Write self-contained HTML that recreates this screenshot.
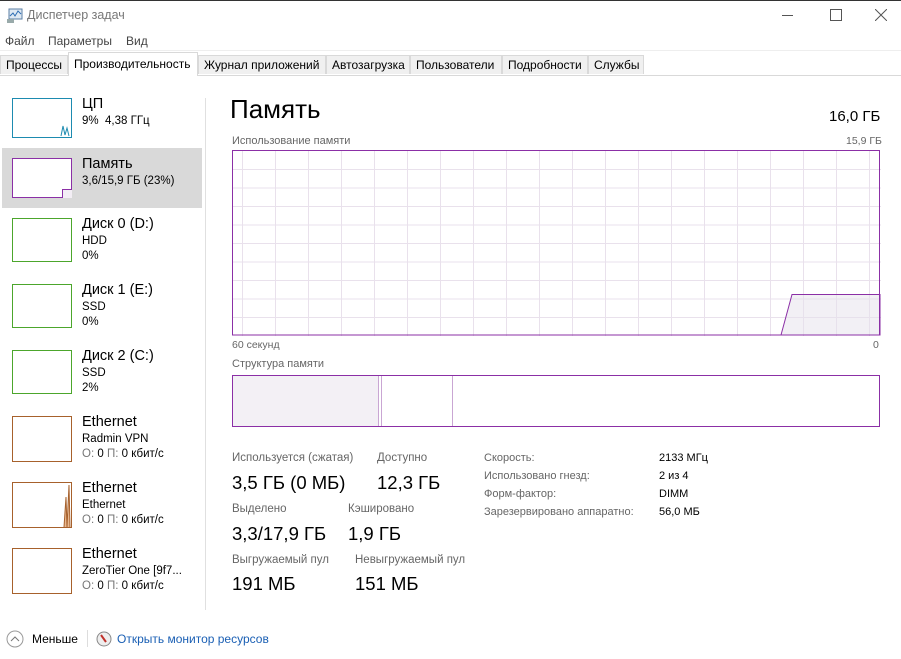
<!DOCTYPE html>
<html><head><meta charset="utf-8"><style>
body{margin:0;width:901px;height:659px;background:#fff;position:relative;overflow:hidden;font-family:"Liberation Sans",sans-serif;color:#000}
.a{position:absolute;white-space:nowrap}
.g{color:#6d6d6d}
.tab{position:absolute;top:55px;height:19px;background:#f0f0f0;border:1px solid #d9d9d9;border-bottom:none;font-size:12px;line-height:19px;padding-left:5px;box-sizing:border-box}
.th{position:absolute;left:12px;width:60px;box-sizing:border-box;background:#fff}
.t1{font-size:14.5px}
.t2{font-size:11.5px}
.sl{font-size:11.5px;color:#666}
.sv{font-size:18.5px}
.rs{font-size:11px;color:#444}
</style></head><body>
<div class="a" style="left:0;top:0;width:901px;height:1px;background:#333"></div>
<svg class="a" style="left:6px;top:8px" width="18" height="16" viewBox="0 0 18 16"><rect x="3" y="1" width="13" height="10" fill="#dfe9f3" stroke="#5b7fa6"/><polyline points="4,8 7,5 9,8 12,3 15,6" fill="none" stroke="#2d6db3"/><rect x="1" y="11" width="7" height="4" fill="#9aa" /></svg>
<div class="a g" style="left:27px;top:8px;font-size:12.5px;color:#777">Диспетчер задач</div>
<div class="a" style="left:782px;top:15px;width:11px;height:1px;background:#555"></div>
<div class="a" style="left:830px;top:9px;width:10px;height:10px;border:1px solid #555"></div>
<svg class="a" style="left:875px;top:9px" width="12" height="12"><path d="M0 0L12 12M12 0L0 12" stroke="#555"/></svg>
<div class="a" style="left:5px;top:34px;font-size:12px;color:#444">Файл</div>
<div class="a" style="left:48px;top:34px;font-size:12px;color:#444">Параметры</div>
<div class="a" style="left:126px;top:34px;font-size:12px;color:#444">Вид</div>
<div class="a" style="left:0;top:50px;width:901px;height:1px;background:#eee"></div>
<div class="a" style="left:0;top:75px;width:901px;height:1px;background:#d9d9d9"></div>
<div class="tab" style="left:0;width:68px">Процессы</div>
<div class="tab" style="left:68px;top:52px;height:24px;width:130px;background:#fff;line-height:22px">Производительность</div>
<div class="tab" style="left:198px;width:128px">Журнал приложений</div>
<div class="tab" style="left:326px;width:84px">Автозагрузка</div>
<div class="tab" style="left:410px;width:92px">Пользователи</div>
<div class="tab" style="left:502px;width:86px">Подробности</div>
<div class="tab" style="left:588px;width:56px;border-right:1px solid #d9d9d9">Службы</div>

<div class="a" style="left:2px;top:148px;width:200px;height:60px;background:#d9d9d9"></div>
<div class="a" style="left:205px;top:98px;width:1px;height:512px;background:#e0e0e0"></div>

<div class="th" style="top:98px;height:40px;border:1px solid #1d8bb0"></div>
<svg class="a" style="left:60px;top:122px" width="12" height="15"><polyline points="1,14 3,4 5,13 7,6 9,14" fill="none" stroke="#1d8bb0"/></svg>
<div class="a t1" style="left:82px;top:96px">ЦП</div>
<div class="a t2" style="left:82px;top:115px">9%&nbsp; 4,38 ГГц</div>

<div class="th" style="top:158px;height:40px;border:1px solid #8b2fa6"></div>
<div class="a" style="left:62px;top:189px;width:9px;height:8px;border-left:1px solid #8b2fa6;border-top:1px solid #8b2fa6;background:#f3eef5"></div>
<div class="a t1" style="left:82px;top:156px">Память</div>
<div class="a t2" style="left:82px;top:175px">3,6/15,9 ГБ (23%)</div>

<div class="th" style="top:218px;height:44px;border:1px solid #4ca62c"></div>
<div class="a t1" style="left:82px;top:216px">Диск 0 (D:)</div>
<div class="a t2" style="left:82px;top:235px">HDD</div>
<div class="a t2" style="left:82px;top:250px">0%</div>
<div class="th" style="top:284px;height:44px;border:1px solid #4ca62c"></div>
<div class="a t1" style="left:82px;top:282px">Диск 1 (E:)</div>
<div class="a t2" style="left:82px;top:301px">SSD</div>
<div class="a t2" style="left:82px;top:316px">0%</div>
<div class="th" style="top:350px;height:44px;border:1px solid #4ca62c"></div>
<div class="a t1" style="left:82px;top:348px">Диск 2 (C:)</div>
<div class="a t2" style="left:82px;top:367px">SSD</div>
<div class="a t2" style="left:82px;top:382px">2%</div>

<div class="th" style="top:416px;height:46px;border:1px solid #a7612c"></div>
<div class="a t1" style="left:82px;top:414px">Ethernet</div>
<div class="a t2" style="left:82px;top:433px">Radmin VPN</div>
<div class="a t2" style="left:82px;top:448px"><span style="color:#777">О:</span> 0 <span style="color:#777">П:</span> 0 кбит/с</div>
<div class="th" style="top:482px;height:46px;border:1px solid #a7612c"></div>
<svg class="a" style="left:62px;top:483px" width="9" height="44"><path d="M2 44L4 14L5 44M5 44L7 2L8 44" fill="#e8b890" stroke="#a7612c"/></svg>
<div class="a t1" style="left:82px;top:480px">Ethernet</div>
<div class="a t2" style="left:82px;top:499px">Ethernet</div>
<div class="a t2" style="left:82px;top:514px"><span style="color:#777">О:</span> 0 <span style="color:#777">П:</span> 0 кбит/с</div>
<div class="th" style="top:548px;height:46px;border:1px solid #a7612c"></div>
<div class="a t1" style="left:82px;top:546px">Ethernet</div>
<div class="a t2" style="left:82px;top:565px">ZeroTier One [9f7...</div>
<div class="a t2" style="left:82px;top:580px"><span style="color:#777">О:</span> 0 <span style="color:#777">П:</span> 0 кбит/с</div>

<div class="a" style="left:230px;top:94px;font-size:26px">Память</div>
<div class="a" style="left:829px;top:108px;font-size:15px">16,0 ГБ</div>
<div class="a sl" style="left:232px;top:135px;font-size:11px">Использование памяти</div>
<div class="a sl" style="left:846px;top:135px;font-size:10.5px">15,9 ГБ</div>
<svg class="a" style="left:232px;top:150px" width="649" height="186">
<g stroke="#e9e1ec" stroke-width="1">
<path d="M0 19.5H649M0 38H649M0 56.5H649M0 75H649M0 93.5H649M0 112H649M0 130.5H649M0 149H649M0 167.5H649"/>
<path d="M637.5 0V186M604.5 0V186M571.5 0V186M538.5 0V186M505.5 0V186M472.5 0V186M439.5 0V186M406.5 0V186M373.5 0V186M340.5 0V186M307.5 0V186M274.5 0V186M241.5 0V186M208.5 0V186M175.5 0V186M142.5 0V186M109.5 0V186M76.5 0V186M43.5 0V186M10.5 0V186"/>
</g>
<path d="M549 185L560 144.5H648V185Z" fill="rgba(230,225,235,0.5)" stroke="#8b2fa6"/>
<rect x="0.5" y="0.5" width="647" height="184.5" fill="none" stroke="#8b2fa6"/>
</svg>
<div class="a sl" style="left:232px;top:339px;font-size:10.5px">60 секунд</div>
<div class="a sl" style="left:873px;top:339px;font-size:10.5px">0</div>
<div class="a sl" style="left:232px;top:358px;font-size:11px">Структура памяти</div>
<svg class="a" style="left:232px;top:375px" width="649" height="52">
<rect x="1" y="1" width="146" height="50" fill="#f3f0f5"/>
<path d="M146.5 1V51M149.5 1V51M220.5 1V51" stroke="#c9a6d3"/>
<rect x="0.5" y="0.5" width="647" height="51" fill="none" stroke="#8b2fa6"/>
</svg>

<div class="a sl" style="left:232px;top:452px">Используется (сжатая)</div>
<div class="a sv" style="left:232px;top:472px">3,5 ГБ (0 МБ)</div>
<div class="a sl" style="left:377px;top:452px">Доступно</div>
<div class="a sv" style="left:377px;top:472px">12,3 ГБ</div>
<div class="a sl" style="left:232px;top:503px">Выделено</div>
<div class="a sv" style="left:232px;top:523px">3,3/17,9 ГБ</div>
<div class="a sl" style="left:348px;top:503px">Кэшировано</div>
<div class="a sv" style="left:348px;top:523px">1,9 ГБ</div>
<div class="a sl" style="left:232px;top:554px">Выгружаемый пул</div>
<div class="a sv" style="left:232px;top:573px">191 МБ</div>
<div class="a sl" style="left:355px;top:554px">Невыгружаемый пул</div>
<div class="a sv" style="left:355px;top:573px">151 МБ</div>

<div class="a rs" style="left:484px;top:452px;color:#666">Скорость:</div>
<div class="a rs" style="left:484px;top:470px;color:#666">Использовано гнезд:</div>
<div class="a rs" style="left:484px;top:488px;color:#666">Форм-фактор:</div>
<div class="a rs" style="left:484px;top:506px;color:#666">Зарезервировано аппаратно:</div>
<div class="a rs" style="left:659px;top:452px;color:#000">2133 МГц</div>
<div class="a rs" style="left:659px;top:470px;color:#000">2 из 4</div>
<div class="a rs" style="left:659px;top:488px;color:#000">DIMM</div>
<div class="a rs" style="left:659px;top:506px;color:#000">56,0 МБ</div>

<svg class="a" style="left:6px;top:630px" width="18" height="18"><circle cx="9" cy="9" r="8" fill="none" stroke="#999"/><path d="M5 11L9 7L13 11" fill="none" stroke="#777"/></svg>
<div class="a" style="left:32px;top:632px;font-size:12px">Меньше</div>
<div class="a" style="left:87px;top:630px;width:1px;height:17px;background:#ddd"></div>
<svg class="a" style="left:96px;top:631px" width="16" height="16"><circle cx="8" cy="8" r="7" fill="#eee" stroke="#888"/><path d="M5 4L10 11" stroke="#c0302a" stroke-width="2"/></svg>
<div class="a" style="left:117px;top:632px;font-size:12px;color:#1a5fb4">Открыть монитор ресурсов</div>
</body></html>
